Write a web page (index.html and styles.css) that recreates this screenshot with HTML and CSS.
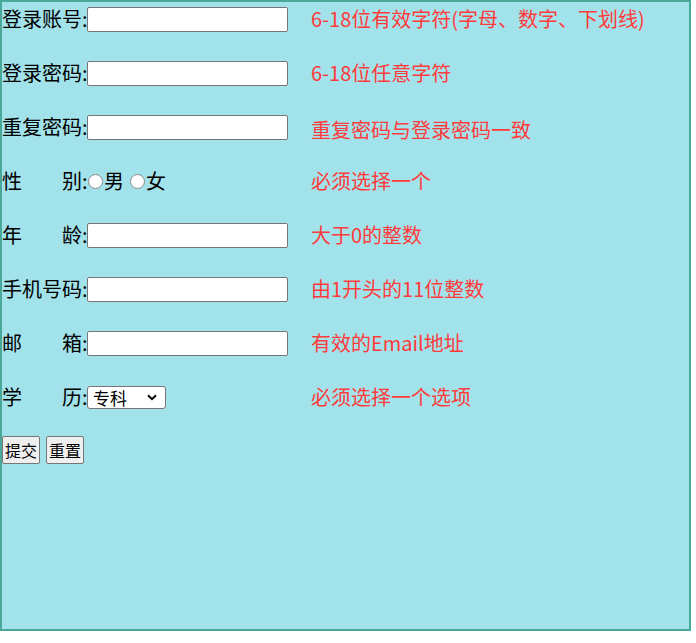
FILE: index.html
```html
<!DOCTYPE html>
<html lang="zh-CN">
<head>
<meta charset="utf-8">
<title>注册</title>
<link rel="stylesheet" href="styles.css">
</head>
<body>
<form class="box">
  <div class="row">
    <label class="label">登录账号:</label><input class="field" type="text">
    <span class="hint">6-18位有效字符(字母、数字、下划线)</span>
  </div>
  <div class="row">
    <label class="label">登录密码:</label><input class="field" type="password">
    <span class="hint">6-18位任意字符</span>
  </div>
  <div class="row">
    <label class="label">重复密码:</label><input class="field" type="password">
    <span class="hint hint-low">重复密码与登录密码一致</span>
  </div>
  <div class="row">
    <label class="label">性　　别:</label>
    <span class="radios">
      <input class="radio" type="radio" name="sex"><span class="opt">男</span>
      <input class="radio radio-second" type="radio" name="sex"><span class="opt">女</span>
    </span>
    <span class="hint">必须选择一个</span>
  </div>
  <div class="row">
    <label class="label">年　　龄:</label><input class="field" type="text">
    <span class="hint">大于0的整数</span>
  </div>
  <div class="row">
    <label class="label">手机号码:</label><input class="field" type="text">
    <span class="hint">由1开头的11位整数</span>
  </div>
  <div class="row">
    <label class="label">邮　　箱:</label><input class="field" type="text">
    <span class="hint">有效的Email地址</span>
  </div>
  <div class="row">
    <label class="label">学　　历:</label>
    <span class="select-wrap">
      <select class="select">
        <option>专科</option>
        <option>本科</option>
        <option>硕士</option>
        <option>博士</option>
      </select>
      <svg class="chevron" width="10" height="7" viewBox="0 0 10 7" aria-hidden="true">
        <path d="M1 1.2 L5 5.2 L9 1.2" fill="none" stroke="#000" stroke-width="2"/>
      </svg>
    </span>
    <span class="hint">必须选择一个选项</span>
  </div>
  <div class="row buttons">
    <button class="btn" type="submit">提交</button>
    <button class="btn" type="reset">重置</button>
  </div>
</form>
</body>
</html>
```
FILE: styles.css
```css
html, body {
  margin: 0;
  padding: 0;
  background: #ffffff;
}

.box {
  box-sizing: border-box;
  width: 691px;
  height: 631px;
  margin: 0;
  padding-top: 2px;
  background: #a2e2ea;
  border: 2px solid #4aa89b;
  font-family: "Noto Sans CJK SC", "Microsoft YaHei", sans-serif;
  font-size: 20px;
  color: #000;
}

.row {
  display: flex;
  align-items: center;
  height: 30px;
  margin-bottom: 24px;
  white-space: nowrap;
}

.label {
  display: inline-block;
  width: 85px;
  line-height: 30px;
}

.field {
  box-sizing: border-box;
  width: 201px;
  height: 25px;
  margin: 0;
  padding: 0 3px;
  border: 1px solid #767676;
  border-radius: 2px;
  background: #fff;
  font-size: 14px;
}

.hint {
  margin-left: 23px;
  color: #ff3b3b;
  line-height: 30px;
}

.hint-low {
  position: relative;
  top: 3px;
}

.radios {
  display: flex;
  align-items: center;
  width: 201px;
}

.radio {
  appearance: none;
  -webkit-appearance: none;
  box-sizing: border-box;
  width: 15px;
  height: 15px;
  margin: 0 1px 0 1px;
  border: 1px solid #8a8a8a;
  border-radius: 50%;
  background: #fff;
}

.radio-second {
  margin-left: 6px;
}

.opt {
  line-height: 30px;
}

.select-wrap {
  position: relative;
  display: inline-flex;
  margin-right: 122px;
}

.select {
  appearance: none;
  -webkit-appearance: none;
  box-sizing: border-box;
  width: 79px;
  height: 23px;
  margin: 0;
  padding: 0 0 0 5px;
  border: 1px solid #767676;
  border-radius: 3px;
  background: #fff;
  font-family: "Noto Sans CJK SC", sans-serif;
  font-size: 17px;
  line-height: 21px;
  color: #000;
}

.chevron {
  position: absolute;
  left: 60px;
  top: 8px;
  pointer-events: none;
}

.buttons {
  gap: 6px;
  align-items: flex-start;
}

.btn {
  box-sizing: border-box;
  height: 28px;
  margin: 0;
  padding: 0 2px;
  border: 1px solid #767676;
  border-radius: 2px;
  background: #efefef;
  font-family: "Noto Sans CJK SC", sans-serif;
  font-size: 16px;
  color: #000;
}
```
